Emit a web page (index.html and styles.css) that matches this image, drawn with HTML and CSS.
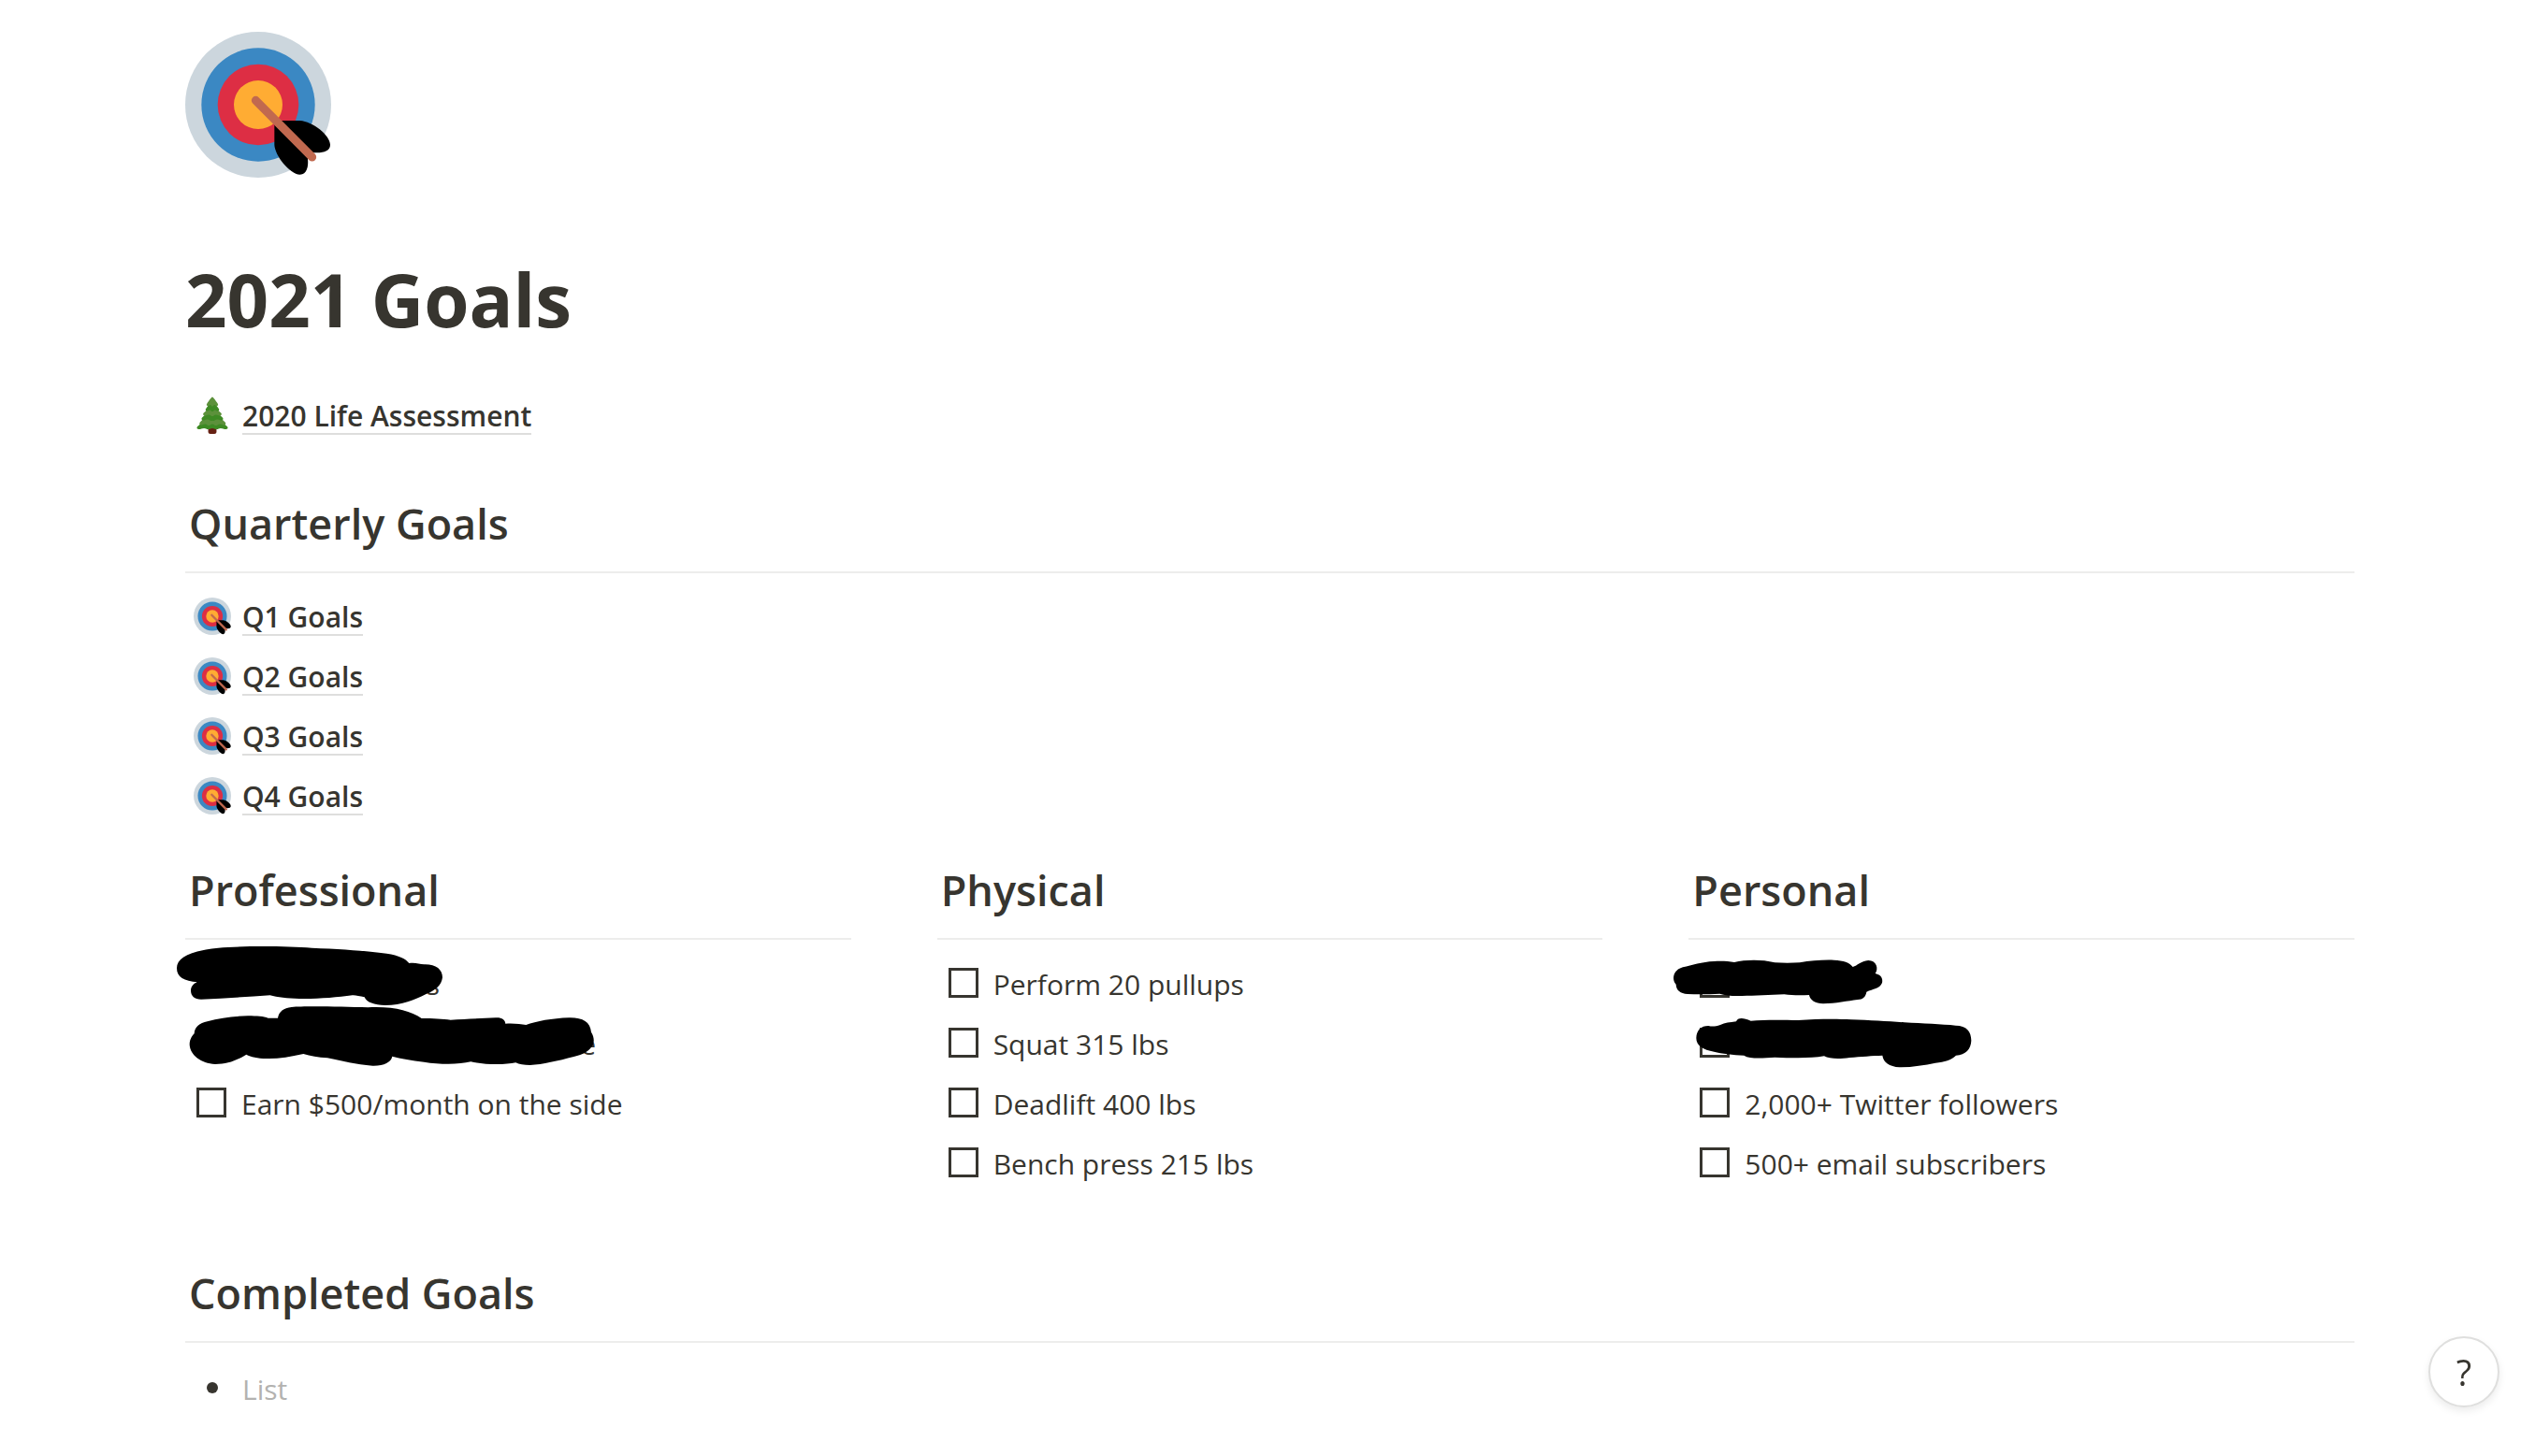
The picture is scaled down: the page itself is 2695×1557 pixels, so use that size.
FILE: index.html
```html
<!DOCTYPE html>
<html lang="en">
<head>
  <meta charset="UTF-8">
  <meta name="viewport" content="width=device-width, initial-scale=1.0">
  <title>2021 Goals</title>
  <link rel="stylesheet" href="styles.css">
</head>
<body>

  <!-- shared icons -->
  <svg class="sprite" aria-hidden="true">
    <symbol id="target" viewBox="54 42 468 468">
      <circle cx="288" cy="276" r="234" fill="#ccd6dd"/>
      <circle cx="288" cy="276" r="182" fill="#3b88c3"/>
      <circle cx="288" cy="276" r="130" fill="#dd2e44"/>
      <circle cx="288" cy="276" r="78" fill="#ffac33"/>
      <path d="M340 340 L353 327 H422 C462 329 519 374 519 404 C519 426 494 432 462 429 L447 450 C450 474 444 500 422 500 C388 498 341 438 340 404 Z" fill="#000"/>
      <path d="M280 262 L461 444" stroke="#c1694f" stroke-width="27" stroke-linecap="round"/>
    </symbol>
    <symbol id="tree" viewBox="0 0 36 36">
      <path d="M14 29h8v5c0 1.500-1 2-2 2h-4c-1 0-2-.5-2-2z" fill="#662113"/>
      <path d="M18 17c-5 4-10 8-14.500 12-1 1.500 0 2.500 1.500 2.500 2 0 3-1 5-1 2 0 2 1 4 1s2-1 4-1 2 1 4 1 2-1 4-1 3 1 5 1c1.500 0 2.500-1 1.500-2.500C28 25 23 21 18 17z" fill="#3e8a24"/>
      <path d="M18 12c-4 5-8 9-12 13-1 1 0 2.500 1 2.500 2 0 2-1 4-1s2 1.500 3.500 1.500 2-1.500 3.500-1.500 2 1.500 3.500 1.500 2-1.500 4-1.500 2 1 4 1c1 0 2-1.500 1-2.500C26 21 22 17 18 12z" fill="#5c913b"/>
      <path d="M18 9c-3 4-6 8-10 11.500-1 1 0 2.500 1 2.500 2 0 2-1 4-1s2.500 1.500 5 1.500 3-1.500 5-1.500 2 1 4 1c1 0 2-1.500 1-2.500C24 17 21 13 18 9z" fill="#3e8a24"/>
      <path d="M18 6c-2 4-5 7-8.500 10-1 1 0 2.500 1 2.500 2 0 2-1 4-1s2 1.500 3.500 1.500 1.500-1.500 3.500-1.500 2 1 4 1c1 0 2-1.500 1-2.500C23 13 20 10 18 6z" fill="#5c913b"/>
      <path d="M18 3c-2 3-4 6-6 8.500-1 1-.5 2.500.5 2.500 1.500 0 2-1 3-1s1.500 1.500 2.500 1.500 1.500-1.500 2.500-1.500 1.500 1 3 1c1 0 1.500-1.500.5-2.500C22 9 20 6 18 3z" fill="#3e8a24"/>
      <path d="M18 .5c-1 0-3 3.500-5 6-1 1.500-.5 2.500.5 2.500 1.500 0 1.500-1 2.500-1s1 1.500 2 1.500 1-1.500 2-1.500 1 1 2.500 1c1 0 1.500-1 .5-2.500-2-2.500-4-6-5-6z" fill="#5c913b"/>
    </symbol>
  </svg>

  <main class="page">
    <svg class="page_icon" role="img" aria-label="Target"><use href="#target"/></svg>
    <h1>2021 Goals</h1>

    <ul class="links">
      <li><a href="#assessment"><svg><use href="#tree"/></svg><span>2020 Life Assessment</span></a></li>
    </ul>

    <!-- quarterly goals -->
    <section class="quarterly">
      <h2>Quarterly Goals</h2>
      <ul class="links">
        <li><a href="#q1"><svg><use href="#target"/></svg><span>Q1 Goals</span></a></li>
        <li><a href="#q2"><svg><use href="#target"/></svg><span>Q2 Goals</span></a></li>
        <li><a href="#q3"><svg><use href="#target"/></svg><span>Q3 Goals</span></a></li>
        <li><a href="#q4"><svg><use href="#target"/></svg><span>Q4 Goals</span></a></li>
      </ul>
    </section>

    <!-- goals by area -->
    <div class="areas">
      <section>
        <h2>Professional</h2>
        <ul class="todos">
          <li><input type="checkbox" aria-label="Private goal 1"></li>
          <li><input type="checkbox" aria-label="Private goal 2"></li>
          <li><input type="checkbox" id="earn"><label for="earn">Earn $500/month on the side</label></li>
        </ul>
        <svg class="scribble scribble_left" viewBox="0 270 1500 399" aria-hidden="true">
          <text x="827" y="432">s</text>
          <text x="1321" y="624">e</text>
          <path d="M94 391 C50 388 27 375 27 346 C27 310 75 290 160 281 C240 274 380 275 460 281 C560 285 640 291 700 299 C740 305 762 316 772 330 C790 327 805 332 820 334 C858 333 879 350 879 376 C876 402 855 418 825 430 C790 448 750 465 695 465 C660 464 636 456 629 439 C612 436 600 432 590 433 C540 440 480 445 420 444 C380 443 350 440 326 433 C250 438 180 443 105 446 C84 446 72 436 72 417 C73 403 82 394 94 391 Z"/>
          <path d="M83 556 C84 535 100 522 125 517 C165 505 210 500 255 499 C285 499 305 501 320 506 H351 C354 485 370 474 395 471 C440 467 560 470 640 472 C720 468 775 482 812 507 C850 507 880 509 905 512 C950 510 1000 507 1050 505 C1070 504 1080 512 1081 524 C1105 522 1130 525 1147 528 C1180 516 1230 507 1285 505 C1328 504 1353 518 1356 551 C1365 565 1366 580 1362 590 C1352 612 1330 622 1300 630 C1250 643 1200 655 1160 657 C1140 657 1125 655 1114 649 C1080 656 1020 657 970 646 C930 656 870 655 820 647 C780 642 745 636 718 629 C714 648 690 660 655 659 C600 656 560 643 510 634 C480 632 455 628 433 621 C390 631 350 637 315 636 C285 635 265 631 250 623 C220 642 190 654 150 654 C105 652 70 625 68 592 C68 575 75 564 83 556 Z"/>
        </svg>
      </section>

      <section>
        <h2>Physical</h2>
        <ul class="todos">
          <li><input type="checkbox" id="pullups"><label for="pullups">Perform 20 pullups</label></li>
          <li><input type="checkbox" id="squat"><label for="squat">Squat 315 lbs</label></li>
          <li><input type="checkbox" id="deadlift"><label for="deadlift">Deadlift 400 lbs</label></li>
          <li><input type="checkbox" id="bench"><label for="bench">Bench press 215 lbs</label></li>
        </ul>
      </section>

      <section>
        <h2>Personal</h2>
        <ul class="todos">
          <li><input type="checkbox" aria-label="Private goal 3"></li>
          <li><input type="checkbox" aria-label="Private goal 4"></li>
          <li><input type="checkbox" id="twitter"><label for="twitter">2,000+ Twitter followers</label></li>
          <li><input type="checkbox" id="email"><label for="email">500+ email subscribers</label></li>
        </ul>
        <svg class="scribble scribble_right" viewBox="0 270 1440 402" aria-hidden="true">
          <path d="M68 398 C54 382 58 352 90 343 C120 336 150 326 190 324 C215 322 235 324 255 327 C290 319 340 317 385 328 C410 330 440 330 465 328 C500 321 540 319 575 320 C605 321 625 328 635 342 C650 338 660 323 685 321 C712 322 718 348 707 363 C726 367 732 380 729 393 C722 412 700 412 679 422 C676 438 668 446 650 447 C620 451 580 459 540 460 C515 459 498 449 495 432 C465 434 440 433 415 430 C370 432 320 435 280 435 C250 436 225 434 208 428 C175 430 140 431 105 429 C82 426 69 418 68 398 Z"/>
          <path d="M133 570 C134 545 148 531 172 531 C184 534 195 533 210 528 C225 521 240 520 261 517 C265 505 282 503 308 515 C350 511 410 512 460 513 C520 509 580 508 630 511 C690 513 750 517 800 520 C860 523 920 526 965 530 C1000 530 1015 550 1015 578 C1014 606 997 624 966 626 C950 641 930 647 900 650 C865 657 825 664 785 664 C752 661 733 648 730 626 C700 627 660 630 625 633 C590 638 560 637 543 628 C500 636 440 634 385 632 C345 635 305 638 286 626 C250 624 215 620 190 614 C155 608 133 595 133 570 Z"/>
        </svg>
      </section>
    </div>

    <!-- completed goals -->
    <section class="completed">
      <h2>Completed Goals</h2>
      <ul class="bullets">
        <li><span>List</span></li>
      </ul>
    </section>
  </main>

  <button class="help" type="button" aria-label="Help">?</button>

</body>
</html>
```
FILE: styles.css
```css
:root {
    --font: "Segoe UI", "Open Sans", "Noto Sans", sans-serif;
    --text: #37352f;
    --rule: #ededec;
}

* {box-sizing: border-box;}
body {margin: 0; background: #fff; color: var(--text); font-family: var(--font); font-size: 30px; line-height: 64px;}
ul {list-style: none; margin: 0; padding: 0;}
.sprite {position: absolute; width: 0; height: 0;}

.page {padding: 34px 178px 41px 198px;}
.page_icon {display: block; width: 156px; height: 156px;}

h1 {margin: 82px 0 44px; font-size: 78px; line-height: 96px; font-weight: 700;}
h2 {margin: 0 0 14px; padding: 0 4px 19px; border-bottom: 2px solid var(--rule); font-size: 45px; line-height: 64px; font-weight: 600;}

/* page links */
.links a {display: inline-flex; align-items: center; gap: 12px; height: 64px; padding-left: 9px; color: inherit; font-weight: 600; text-decoration: none; vertical-align: top;}
.links li {height: 64px;}
.links svg {width: 40px; height: 40px;}
.links span {padding-top: 4px; line-height: 36px; border-bottom: 2px solid #dededd;}

.quarterly {margin-top: 52px;}

/* columns */
.areas {display: grid; grid-template-columns: repeat(3, 1fr); gap: 92px; margin-top: 37px;}
.areas section {position: relative;}

.todos li {display: flex; align-items: center; gap: 16px; height: 64px; padding-left: 12px;}
.todos label {padding-top: 4px; line-height: 60px;}
.todos input {appearance: none; width: 32px; height: 32px; margin: 0; border: 3px solid var(--text); background: #fff;}
.todos input:checked {background: var(--text);}

/* marker strokes over the first two items */
.scribble {position: absolute; top: 90px;}
.scribble text {font-size: 90px; fill: var(--text);}
.scribble_left {left: -18px; width: 500px; height: 133px;}
.scribble_right {left: -36px; width: 480px; height: 134px;}

.completed {margin-top: 76px;}
.bullets li {display: flex; align-items: center; gap: 26px; padding-left: 23px; color: #b3b2b0;}
.bullets li::before {content: ""; width: 12px; height: 12px; border-radius: 50%; background: var(--text);}
.bullets span {padding-top: 4px;}

.help {position: fixed; right: 23px; bottom: 52px; width: 76px; height: 76px; padding: 0; border: 2px solid #dfdfde; border-radius: 50%; background: #fff; box-shadow: 0 4px 8px rgba(15, 15, 15, 0.08); color: var(--text); font-family: var(--font); font-size: 38px;}
```
